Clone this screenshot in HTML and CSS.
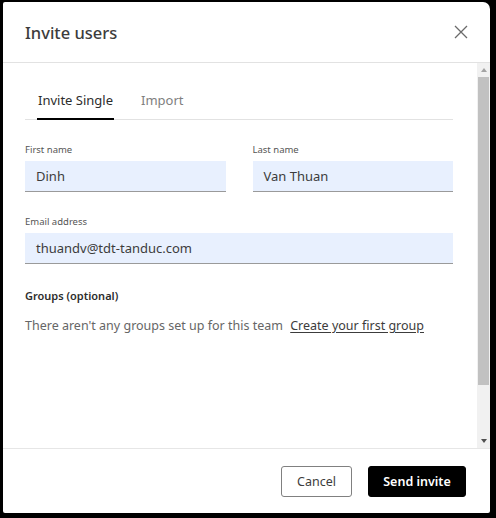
FILE: index.html
```html
<!DOCTYPE html>
<html>
<head>
<meta charset="utf-8">
<link rel="stylesheet" href="styles.css">
</head>
<body>
<div class="dialog">
  <div class="header">
    <h1 class="title">Invite users</h1>
    <button class="close" aria-label="Close">
      <svg width="14" height="14" viewBox="0 0 14 14"><path d="M1 1L13 13M13 1L1 13" stroke="#6a6a6a" stroke-width="1.3" fill="none"/></svg>
    </button>
  </div>
  <div class="body">
    <div class="content">
      <div class="tabs">
        <div class="tab active">Invite Single</div>
        <div class="tab">Import</div>
      </div>
      <div class="row">
        <div class="field">
          <label class="label">First name</label>
          <div class="input">Dinh</div>
        </div>
        <div class="field">
          <label class="label">Last name</label>
          <div class="input">Van Thuan</div>
        </div>
      </div>
      <div class="field email">
        <label class="label">Email address</label>
        <div class="input">thuandv@tdt-tanduc.com</div>
      </div>
      <div class="groups-title">Groups (optional)</div>
      <div class="groups-text">There aren't any groups set up for this team <a class="link">Create your first group</a></div>
    </div>
    <div class="scrollbar">
      <div class="sb-btn"><span class="arrow-up"></span></div>
      <div class="sb-thumb"></div>
      <div class="sb-track"></div>
      <div class="sb-btn"><span class="arrow-down"></span></div>
    </div>
  </div>
  <div class="footer">
    <button class="btn cancel">Cancel</button>
    <button class="btn primary">Send invite</button>
  </div>
</div>
</body>
</html>
```
FILE: styles.css
```css
html, body {
  margin: 0;
  height: 518px;
  background: #000;
  overflow: hidden;
}
body {
  padding: 2px 6px 5px 3px;
  box-sizing: border-box;
  font-family: "Noto Sans", "Open Sans", sans-serif;
  color: #3c3c3c;
}
.dialog {
  background: #fff;
  height: 100%;
  border-radius: 2px 7px 2px 2px;
  display: flex;
  flex-direction: column;
  overflow: hidden;
}
.header {
  height: 60px;
  border-bottom: 1px solid #e2e2e2;
  display: flex;
  align-items: center;
  justify-content: space-between;
  padding: 0 22px 0 22px;
  flex-shrink: 0;
}
.title {
  margin: 0;
  font-size: 16.5px;
  font-weight: 500;
  color: #3c3c3c;
  padding-top: 1px;
}
.close {
  background: none;
  border: 0;
  padding: 0;
  width: 14px;
  height: 14px;
  display: flex;
}
.body {
  flex: 1;
  display: flex;
  min-height: 0;
}
.content {
  flex: 1;
  padding: 22px 24px 0 22px;
}
.tabs {
  display: flex;
  gap: 27px;
  padding-left: 13px;
  border-bottom: 1px solid #e2e2e2;
}
.tab {
  font-size: 13px;
  color: #808080;
  padding: 6px 0 9px;
  border-bottom: 2px solid transparent;
  margin-bottom: -1px;
}
.tab.active {
  color: #2d2d2d;
  border-bottom-color: #000;
  padding: 6px 1px 9px;
  margin-left: -1px;
}
.row {
  display: flex;
  gap: 27px;
  margin-top: 23px;
}
.row .field {
  flex: 1;
}
.field {
  display: flex;
  flex-direction: column;
  gap: 4px;
}
.email {
  margin-top: 23px;
}
.label {
  font-size: 9.5px;
  line-height: 14px;
  color: #555;
}
.input {
  height: 30px;
  background: #e8f0fe;
  border-bottom: 1px solid #9a9a9a;
  padding: 0 11px;
  display: flex;
  align-items: center;
  font-size: 13px;
  color: #3c3c3c;
}
.groups-title {
  margin-top: 24px;
  font-size: 11px;
  font-weight: 600;
  line-height: 16px;
  color: #2d2d2d;
}
.groups-text {
  margin-top: 12px;
  font-size: 12.5px;
  line-height: 20px;
  color: #666;
  white-space: nowrap;
}
.link {
  margin-left: 4px;
  text-decoration: underline;
  text-underline-offset: 2px;
  color: #3c3c3c;
}
.scrollbar {
  width: 13px;
  background: #f1f1f1;
  display: flex;
  flex-direction: column;
}
.sb-btn {
  height: 14px;
  display: flex;
  align-items: center;
  justify-content: center;
}
.arrow-up {
  width: 0;
  height: 0;
  border-left: 3.5px solid transparent;
  border-right: 3.5px solid transparent;
  border-bottom: 4px solid #a3a3a3;
}
.arrow-down {
  width: 0;
  height: 0;
  border-left: 3.5px solid transparent;
  border-right: 3.5px solid transparent;
  border-top: 4px solid #505050;
}
.sb-thumb {
  height: 308px;
  background: #c1c1c1;
  margin: 0 1px;
}
.sb-track {
  flex: 1;
}
.footer {
  height: 64px;
  border-top: 1px solid #e6e6e6;
  display: flex;
  align-items: center;
  justify-content: flex-end;
  gap: 16px;
  padding: 0 24px;
  flex-shrink: 0;
}
.btn {
  height: 31px;
  font-family: inherit;
  font-size: 12.5px;
  border-radius: 3px;
  padding: 0;
  white-space: nowrap;
  cursor: pointer;
}
.cancel {
  width: 71px;
  background: #fff;
  border: 1px solid #808080;
  color: #3c3c3c;
}
.primary {
  width: 98px;
  background: #000;
  border: 1px solid #000;
  color: #fff;
  font-weight: 600;
}
```
